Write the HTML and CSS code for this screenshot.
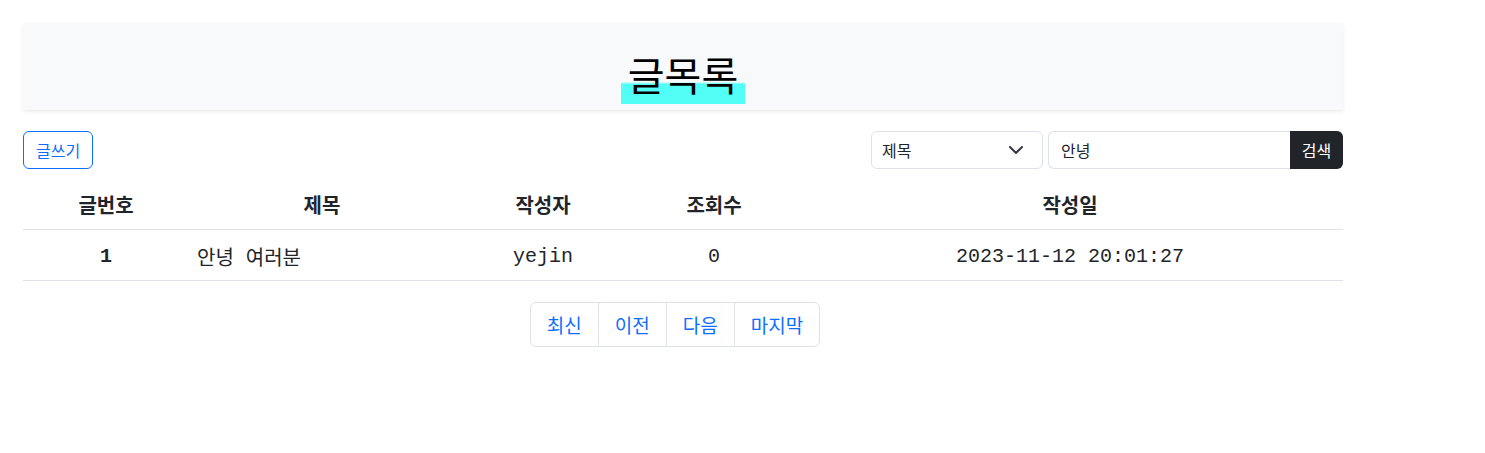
FILE: index.html
```html
<!DOCTYPE html>
<html lang="ko">
<head>
<meta charset="utf-8">
<title>글목록</title>
<link rel="stylesheet" href="styles.css">
</head>
<body>
<div class="page">
  <header class="board-head">
    <h1 class="board-title"><span class="mark">글목록</span></h1>
  </header>

  <div class="toolbar">
    <a class="btn-write" href="#">글쓰기</a>
    <form class="search">
      <div class="select">
        <span class="select-text">제목</span>
        <svg class="chevron" width="14" height="8" viewBox="0 0 14 8"><path d="M1 1l6 6 6-6" fill="none" stroke="#343a40" stroke-width="2" stroke-linecap="round" stroke-linejoin="round"/></svg>
      </div>
      <div class="input-group">
        <div class="input">안녕</div>
        <button class="btn-search" type="button">검색</button>
      </div>
    </form>
  </div>

  <table class="board">
    <thead>
      <tr>
        <th class="c-no">글번호</th>
        <th class="c-title">제목</th>
        <th class="c-writer">작성자</th>
        <th class="c-hit">조회수</th>
        <th class="c-date">작성일</th>
      </tr>
    </thead>
    <tbody>
      <tr>
        <th class="c-no num">1</th>
        <td class="c-title ko">안녕 여러분</td>
        <td class="c-writer">yejin</td>
        <td class="c-hit">0</td>
        <td class="c-date">2023-11-12 20:01:27</td>
      </tr>
    </tbody>
  </table>

  <nav class="pager">
    <ul class="pagination">
      <li><a href="#">최신</a></li>
      <li><a href="#">이전</a></li>
      <li><a href="#">다음</a></li>
      <li><a href="#">마지막</a></li>
    </ul>
  </nav>
</div>
</body>
</html>
```

FILE: styles.css
```css
* { box-sizing: border-box; }

body {
  margin: 0;
  background: #fff;
  color: #212529;
  font-family: "Noto Sans CJK KR", "Noto Sans", sans-serif;
  font-size: 16px;
}

.page {
  width: 1343px;
  padding: 23px 0 0 23px;
}

.board-head {
  height: 87px;
  background: #f8f9fa;
  box-shadow: 0 2px 4px rgba(0, 0, 0, 0.075);
  display: flex;
  justify-content: center;
  align-items: flex-end;
  padding-bottom: 6px;
}

.board-title {
  margin: 0;
  font-size: 40px;
  font-weight: 400;
  line-height: 1;
}

.mark {
  display: inline-block;
  height: 53px;
  line-height: 46px;
  padding: 0 7px;
  color: #000;
  background: linear-gradient(to bottom, rgba(82, 255, 247, 0) 58%, #52fff7 63%);
}

.toolbar {
  margin-top: 21px;
  display: flex;
  justify-content: space-between;
  align-items: center;
  height: 38px;
}

.btn-write {
  display: inline-block;
  height: 38px;
  padding: 6px 12px;
  line-height: 24px;
  border: 1px solid #0d6efd;
  border-radius: 6px;
  color: #0d6efd;
  text-decoration: none;
}

.search {
  display: flex;
  gap: 5px;
  margin: 0;
}

.select {
  width: 172px;
  height: 38px;
  border: 1px solid #dee2e6;
  border-radius: 6px;
  display: flex;
  align-items: center;
  justify-content: space-between;
  padding: 0 19px 0 10px;
}

.select-text, .input {
  line-height: 24px;
}

.chevron { display: block; }

.input-group {
  display: flex;
}

.input {
  width: 242px;
  height: 38px;
  border: 1px solid #dee2e6;
  border-right: 0;
  border-radius: 6px 0 0 6px;
  padding: 6px 12px;
}

.btn-search {
  width: 53px;
  height: 38px;
  border: 0;
  border-radius: 0 6px 6px 0;
  background: #212529;
  color: #fff;
  font-family: inherit;
  font-size: 16px;
  padding: 0;
}

.board {
  margin-top: 12px;
  width: 1320px;
  border-collapse: collapse;
  table-layout: fixed;
  font-size: 20px;
}

.board thead th {
  height: 48px;
  padding: 0 8px;
  font-weight: 700;
  text-align: center;
  border-bottom: 1px solid #dee2e6;
  vertical-align: middle;
}

.board tbody th,
.board tbody td {
  height: 51px;
  padding: 3px 8px 0;
  font-family: "Liberation Mono", "Noto Sans CJK KR", monospace;
  text-align: center;
  border-bottom: 1px solid #dee2e6;
  vertical-align: middle;
}

.board tbody th { font-weight: 700; }

.board tbody td.ko {
  text-align: left;
}

.c-no { width: 166px; }
.c-title { width: 266px; }
.c-writer { width: 176px; }
.c-hit { width: 166px; }
.c-date { width: 546px; }

.pager {
  margin-top: 21px;
  display: flex;
  justify-content: center;
  padding-right: 16px;
}

.pagination {
  display: flex;
  list-style: none;
  margin: 0;
  padding: 0;
}

.pagination li + li { margin-left: -1px; }

.pagination a {
  display: block;
  height: 45px;
  padding: 9px 16px;
  line-height: 25px;
  font-size: 19px;
  color: #0d6efd;
  text-decoration: none;
  border: 1px solid #dee2e6;
}

.pagination li:first-child a { border-radius: 6px 0 0 6px; }
.pagination li:last-child a { border-radius: 0 6px 6px 0; }
```
